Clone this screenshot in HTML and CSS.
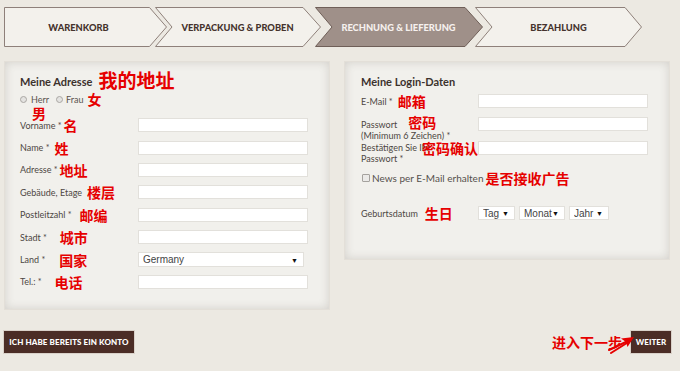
FILE: index.html
```html
<!DOCTYPE html>
<html lang="de">
<head>
<meta charset="utf-8">
<title>Rechnung &amp; Lieferung</title>
<link rel="stylesheet" href="styles.css">
</head>
<body>
<div class="page">
  <nav class="steps">
    <div class="step step-1">
      <svg class="step-bg" viewBox="0 0 163 40" preserveAspectRatio="none"><polygon points="0.5,0.5 145.5,0.5 162.5,20 145.5,39.5 0.5,39.5"/></svg>
      <span class="step-label">WARENKORB</span>
    </div>
    <div class="step step-2">
      <svg class="step-bg" viewBox="0 0 166 40" preserveAspectRatio="none"><polygon points="0.5,0.5 148,0.5 165.5,20 148,39.5 0.5,39.5 17,20"/></svg>
      <span class="step-label">VERPACKUNG &amp; PROBEN</span>
    </div>
    <div class="step step-3">
      <svg class="step-bg" viewBox="0 0 168 40" preserveAspectRatio="none"><polygon points="0.5,0.5 150,0.5 167.5,20 150,39.5 0.5,39.5 17,20"/></svg>
      <span class="step-label">RECHNUNG &amp; LIEFERUNG</span>
    </div>
    <div class="step step-4">
      <svg class="step-bg" viewBox="0 0 167 40" preserveAspectRatio="none"><polygon points="0.5,0.5 150,0.5 166.5,20 150,39.5 0.5,39.5 17,20"/></svg>
      <span class="step-label">BEZAHLUNG</span>
    </div>
  </nav>

  <div class="panels">
    <section class="panel panel-address">
      <h2 class="panel-title">Meine Adresse<span class="cn cn-title">我的地址</span></h2>
      <div class="gender">
        <input class="radio" type="radio" name="anrede"><span class="gender-text">Herr</span>
        <input class="radio radio-2" type="radio" name="anrede"><span class="gender-text">Frau</span>
        <span class="cn gap4">女</span>
      </div>
      <div class="male"><span class="cn">男</span></div>
      <div class="fields">
        <label class="lbl">Vorname *<span class="cn gap2">名</span></label><input class="field" type="text">
        <label class="lbl">Name *<span class="cn gap5">姓</span></label><input class="field" type="text">
        <label class="lbl">Adresse *<span class="cn gap2">地址</span></label><input class="field" type="text">
        <label class="lbl">Gebäude, Etage<span class="cn gap5">楼层</span></label><input class="field" type="text">
        <label class="lbl">Postleitzahl *<span class="cn gap8">邮编</span></label><input class="field" type="text">
        <label class="lbl">Stadt *<span class="cn gap13">城市</span></label><input class="field" type="text">
        <label class="lbl">Land *<span class="cn gap14">国家</span></label>
        <span class="select-wrap select-country"><select class="select"><option>Germany</option></select></span>
        <label class="lbl">Tel.: *<span class="cn gap13">电话</span></label><input class="field" type="text">
      </div>
    </section>

    <section class="panel panel-login">
      <h2 class="panel-title">Meine Login-Daten</h2>
      <div class="login-row row-email">
        <label class="lbl">E-Mail *<span class="cn gap5">邮箱</span></label><input class="field" type="text">
      </div>
      <div class="login-row row-pass">
        <label class="lbl lbl-multi lbl-pass"><span class="lbl-line">Passwort<span class="cn cn-lift gap11">密码</span></span><span class="lbl-line">(Minimum 6 Zeichen) *</span></label><input class="field" type="password">
      </div>
      <div class="login-row row-confirm">
        <label class="lbl lbl-multi lbl-confirm"><span class="lbl-line">Bestätigen Sie Ihr</span><span class="lbl-line">Passwort *</span><span class="cn cn-over">密码确认</span></label><input class="field" type="password">
      </div>
      <div class="news">
        <input class="check" type="checkbox"><span class="news-text">News per E-Mail erhalten</span><span class="cn gap2">是否接收广告</span>
      </div>
      <div class="login-row row-birth">
        <label class="lbl">Geburtsdatum<span class="cn gap7">生日</span></label>
        <div class="birth">
          <span class="select-wrap select-tag"><select class="select"><option>Tag</option></select></span>
          <span class="select-wrap select-monat"><select class="select"><option>Monat</option></select></span>
          <span class="select-wrap select-jahr"><select class="select"><option>Jahr</option></select></span>
        </div>
      </div>
    </section>
  </div>

  <div class="actions">
    <button class="btn btn-back" type="button">ICH HABE BEREITS EIN KONTO</button>
    <div class="next-group">
      <span class="cn cn-next">进入下一步</span>
      <svg class="next-arrow" viewBox="0 0 36 22" width="36" height="22">
        <path d="M9 16 L30 6" />
        <path d="M11 19 L30 7" />
        <polygon points="34,3 21,4.5 26,8 27.5,13" />
      </svg>
      <button class="btn btn-next" type="button">WEITER</button>
    </div>
  </div>
</div>
</body>
</html>
```

FILE: styles.css
```css
* { box-sizing: border-box; }
html, body { margin: 0; }
body {
  width: 680px;
  height: 371px;
  overflow: hidden;
  background: #ece9e2;
  font-family: Lato, "Noto Sans", sans-serif;
}
.page { padding: 7px 9px 0 4px; }

/* steps */
.steps { display: flex; height: 40px; }
.step {
  position: relative;
  flex: none;
  height: 40px;
  display: flex;
  align-items: center;
  justify-content: center;
  font-size: 9.3px;
  font-weight: 900;
  color: #45332d;
  white-space: nowrap;
}
.step-bg { position: absolute; left: 0; top: 0; width: 100%; height: 100%; }
.step-bg polygon { fill: #f3f1ec; stroke: #8e807a; stroke-width: 1; }
.step-label { position: relative; }
.step-1 { width: 163px; padding-right: 14px; }
.step-2 { width: 166px; margin-left: -12px; padding-left: 17px; padding-right: 18px; }
.step-3 { width: 168px; margin-left: -6px; padding-left: 17px; padding-right: 18px; color: #f6f1ee; }
.step-3 .step-bg polygon { fill: #9f9089; stroke: #6f5f58; }
.step-4 { width: 167px; margin-left: -8px; padding-left: 17px; padding-right: 17px; }

/* panels */
.panels { display: flex; gap: 14px; margin-top: 14px; align-items: flex-start; }
.panel {
  width: 326px;
  background: #f1f0ec;
  border: 1px solid #e3dfd8;
  box-shadow: inset 0 0 10px rgba(90, 80, 70, 0.2);
  padding: 9px 0 0 15px;
}
.panel-address { height: 249px; }
.panel-login { height: 199px; padding-left: 16px; }
.panel-title {
  margin: 0;
  height: 20px;
  display: flex;
  align-items: center;
  font-size: 11px;
  font-weight: 700;
  color: #3c322e;
}

.cn {
  font-family: "Noto Sans CJK SC", sans-serif;
  font-weight: 700;
  font-size: 14px;
  line-height: 14px;
  color: #e60000;
  white-space: nowrap;
}
.cn-title { font-size: 19px; line-height: 20px; margin-left: 6px; position: relative; top: -1px; }
.gap2 { margin-left: 2px; }
.gap4 { margin-left: 4px; }
.gap5 { margin-left: 5px; }
.gap7 { margin-left: 7px; }
.gap8 { margin-left: 8px; }
.gap11 { margin-left: 11px; }
.gap13 { margin-left: 13px; }
.gap14 { margin-left: 14px; }

.gender {
  display: flex;
  align-items: center;
  height: 14px;
  margin-top: 1px;
  font-size: 9px;
  color: #5a534e;
}
.radio {
  appearance: none;
  width: 7px;
  height: 7px;
  margin: 0 4px 0 0;
  border: 1px solid #aaa7a3;
  border-radius: 50%;
  background: #e4e3e1;
}
.radio-2 { margin-left: 7px; margin-right: 3px; }
.male { height: 8px; padding-left: 12px; }
.male .cn { position: relative; top: -3px; }

.fields {
  display: grid;
  grid-template-columns: 118px 170px;
  grid-auto-rows: 22.4px;
  align-items: center;
}
.lbl {
  display: flex;
  align-items: center;
  font-size: 9px;
  color: #4d4743;
  white-space: nowrap;
  position: relative;
}
.field {
  display: block;
  width: 170px;
  height: 14px;
  margin: 0;
  padding: 0;
  border: 1px solid #e2e0db;
  background: #fff;
}
.select-wrap { position: relative; display: block; }
.select-wrap::after {
  content: "\25BC";
  position: absolute;
  right: 6px;
  top: 50%;
  transform: translateY(-50%);
  font-size: 7px;
  color: #111;
  pointer-events: none;
}
.select {
  appearance: none;
  display: block;
  width: 100%;
  height: 100%;
  margin: 0;
  padding: 0 0 0 4px;
  border: 1px solid #e2e0db;
  border-radius: 0;
  background: #fff;
  font-family: "Liberation Sans", Arial, sans-serif;
  font-size: 10px;
  color: #444;
}
.select-country { width: 166px; height: 15px; }

/* login */
.login-row { display: grid; grid-template-columns: 117px 170px; }
.row-email { margin-top: 3px; align-items: center; }
.row-pass { margin-top: 9px; }
.row-confirm { margin-top: 0; }
.lbl-multi { flex-direction: column; align-items: flex-start; line-height: 11px; }
.lbl-pass { padding-top: 2px; }
.lbl-confirm { padding-top: 1px; }
.lbl-line { display: flex; align-items: center; height: 11px; }
.cn-lift { position: relative; top: -3px; }
.cn-over { position: absolute; left: 61px; top: 0; }
.news {
  display: flex;
  align-items: center;
  height: 14px;
  margin-top: 7px;
}
.check {
  appearance: none;
  width: 8px;
  height: 8px;
  margin: 0 2px 0 1px;
  border: 1px solid #a5a29e;
  border-radius: 1px;
  background: #ebeae8;
}
.news-text { font-size: 10px; color: #55504c; }
.row-birth { margin-top: 21px; align-items: center; }
.birth { display: flex; gap: 4px; }
.select-tag { width: 37px; height: 14px; }
.select-monat { width: 46px; height: 14px; }
.select-jahr { width: 40px; height: 14px; }

/* actions */
.actions {
  display: flex;
  justify-content: space-between;
  align-items: center;
  margin-top: 21px;
}
.btn {
  height: 22px;
  margin: 0;
  padding: 0;
  border: none;
  background: #4b2d26;
  box-shadow: 0 0 0 1px #d9d1c9;
  color: #fff;
  font-family: Lato, sans-serif;
  font-weight: 900;
  font-size: 8px;
  letter-spacing: 0.1px;
  white-space: nowrap;
}
.btn-back { width: 130px; }
.btn-next { width: 40px; }
.next-group { position: relative; display: flex; align-items: center; }
.cn-next { margin-right: 9px; }
.next-arrow { position: absolute; left: 48px; top: 3px; }
.next-arrow path { stroke: #e60000; stroke-width: 2; fill: none; stroke-linecap: round; }
.next-arrow polygon { fill: #e60000; }
```
